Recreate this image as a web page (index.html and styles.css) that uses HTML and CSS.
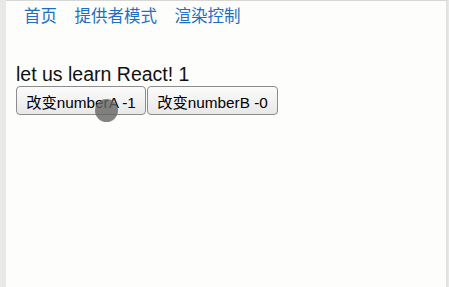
FILE: index.html
```html
<!DOCTYPE html>
<html lang="zh">
<head>
<meta charset="utf-8">
<title>React</title>
<link rel="stylesheet" href="styles.css">
</head>
<body>
<div class="window">
  <nav class="nav">
    <a class="nav-link" href="#">首页</a>
    <a class="nav-link" href="#">提供者模式</a>
    <a class="nav-link" href="#">渲染控制</a>
  </nav>
  <main class="content">
    <div class="title">let us learn React! 1</div>
    <div class="buttons">
      <button class="btn">改变numberA -1</button>
      <button class="btn">改变numberB -0</button>
    </div>
  </main>
  <div class="cursor"></div>
</div>
</body>
</html>
```

FILE: styles.css
```css
html, body {
  margin: 0;
  height: 100%;
}
body {
  background: #e8e8e6;
  font-family: "Liberation Sans", "Noto Sans CJK SC", sans-serif;
  color: #111;
  overflow: hidden;
}
.window {
  position: relative;
  box-sizing: border-box;
  margin-left: 6px;
  margin-right: 1px;
  height: 100%;
  border-top: 1px solid #d6d6d4;
  border-right: 2px solid #e2e2e0;
  background: #fdfdfb;
  padding-left: 10px;
}
.nav {
  display: flex;
  gap: 17.5px;
  margin-left: 8px;
  padding-top: 5px;
  font-size: 16.5px;
  line-height: 20px;
}
.nav-link {
  color: #1d6fc4;
  text-decoration: none;
}
.content {
  padding-top: 37px;
}
.title {
  font-size: 19.5px;
  line-height: 22px;
}
.buttons {
  display: flex;
  gap: 1px;
  margin-top: 1px;
}
.btn {
  height: 29px;
  padding: 0 9.2px;
  border: 1px solid #8c8c8c;
  border-radius: 4px;
  background: linear-gradient(#fbfbfb, #e8e8e8);
  font-family: "Liberation Sans", "Noto Sans CJK SC", sans-serif;
  font-size: 15.3px;
  color: #000;
}
.cursor {
  position: absolute;
  left: 89px;
  top: 98px;
  width: 23px;
  height: 23px;
  border-radius: 50%;
  background: rgba(100, 100, 100, 0.8);
}
```
